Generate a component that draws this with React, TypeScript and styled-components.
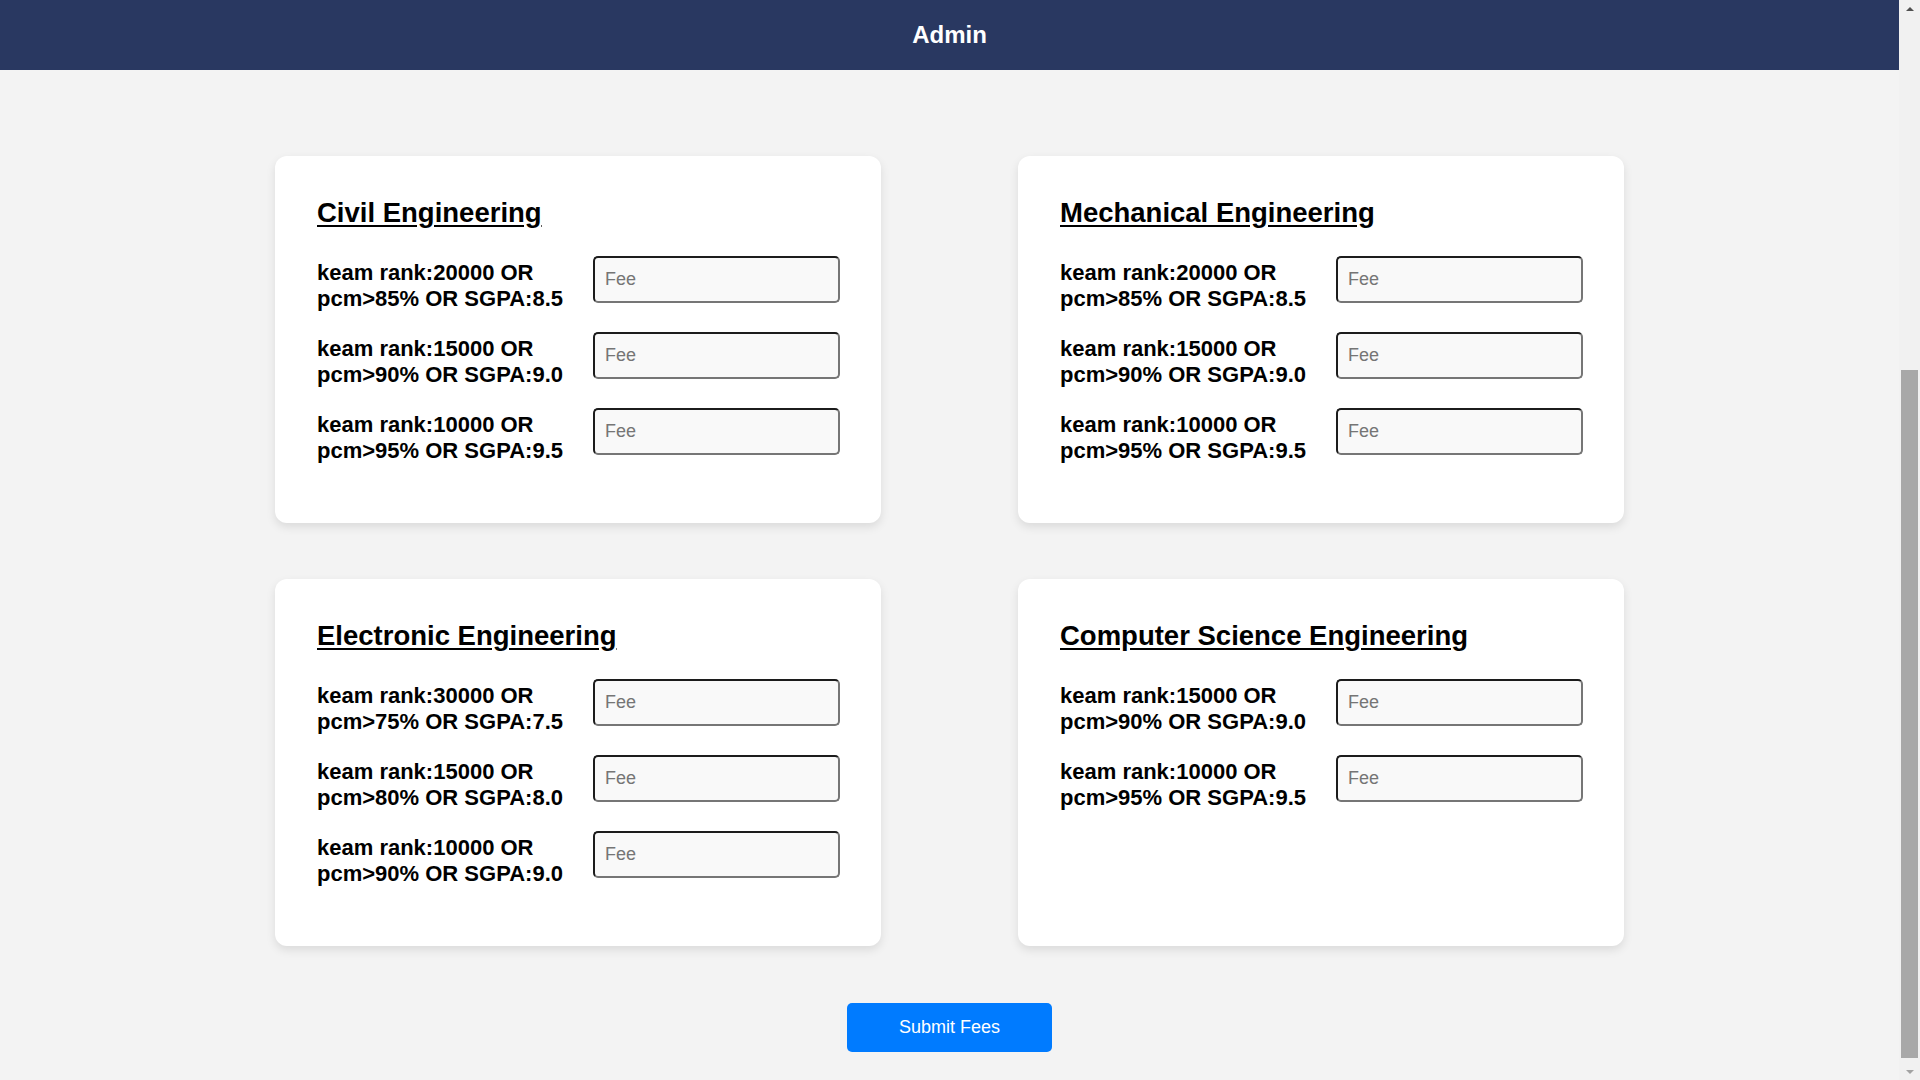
import React from "react";
import styled, { createGlobalStyle } from "styled-components";

const GlobalStyle = createGlobalStyle`
  body {
    margin: 0;
    background: #f3f3f3;
    font-family: "Liberation Sans", Arial, sans-serif;
    color: #000;
  }
  * {
    box-sizing: border-box;
  }
`;

const Window = styled.div`
  display: flex;
  min-height: 100vh;
`;

const Page = styled.div`
  flex: 1;
  min-width: 0;
`;

const Header = styled.header`
  height: 70px;
  background: #293861;
  display: flex;
  align-items: center;
  justify-content: center;
`;

const Title = styled.h1`
  margin: 0;
  color: #fff;
  font-size: 24px;
  font-weight: 700;
`;

const Main = styled.main`
  padding: 86px 0 28px;
  display: flex;
  flex-direction: column;
  align-items: center;
`;

const Grid = styled.div`
  display: grid;
  grid-template-columns: repeat(2, 606px);
  column-gap: 137px;
  row-gap: 56px;
`;

const Card = styled.section`
  background: #fff;
  border-radius: 12px;
  box-shadow: 0 4px 10px rgba(0, 0, 0, 0.1);
  padding: 41px 41px 39px 42px;
`;

const CardTitle = styled.h2`
  margin: 0 0 28px;
  font-size: 27.5px;
  line-height: 31px;
  font-weight: 700;
  text-decoration: underline;
  text-underline-offset: 3px;
`;

const Row = styled.div`
  display: flex;
  align-items: flex-start;
  gap: 24px;
  margin-bottom: 20px;
`;

const Label = styled.label`
  flex: 1;
  padding-top: 4px;
  font-size: 22px;
  line-height: 26px;
  font-weight: 700;
`;

const FeeInput = styled.input`
  width: 247px;
  height: 47px;
  padding: 0 10px;
  border-width: 2px;
  border-style: solid;
  border-color: #1c1c1c #767676 #767676 #1c1c1c;
  border-radius: 5px;
  background: #f9f9f9;
  font-family: "Liberation Sans", Arial, sans-serif;
  font-size: 18px;
  color: #000;
  outline: none;

  &::placeholder {
    color: #757575;
  }
`;

const SubmitButton = styled.button`
  margin-top: 57px;
  padding: 14px 52px;
  border: none;
  border-radius: 5px;
  background: #007bff;
  color: #fff;
  font-family: "Liberation Sans", Arial, sans-serif;
  font-size: 18px;
  line-height: 20.7px;
  cursor: pointer;
`;

const ScrollTrack = styled.div`
  flex: none;
  width: 21px;
  height: 100vh;
  position: sticky;
  top: 0;
  background: #f1f1f1;
  display: flex;
  flex-direction: column;
`;

const ScrollButton = styled.div`
  height: 17px;
  display: flex;
  align-items: center;
  justify-content: center;
`;

const Arrow = styled.span<{ $down?: boolean }>`
  width: 0;
  height: 0;
  border-left: 4px solid transparent;
  border-right: 4px solid transparent;
  ${(p) =>
    p.$down
      ? "border-top: 4px solid #a3a3a3;"
      : "border-bottom: 4px solid #505050;"}
`;

const ThumbArea = styled.div`
  flex: 1;
  display: flex;
  padding: 353px 2px 5px;
`;

const Thumb = styled.div`
  flex: 1;
  background: #a8a8a8;
`;

type Criterion = { rank: string; pcm: string; sgpa: string };

const departments: { name: string; criteria: Criterion[] }[] = [
  {
    name: "Civil Engineering",
    criteria: [
      { rank: "20000", pcm: "85", sgpa: "8.5" },
      { rank: "15000", pcm: "90", sgpa: "9.0" },
      { rank: "10000", pcm: "95", sgpa: "9.5" },
    ],
  },
  {
    name: "Mechanical Engineering",
    criteria: [
      { rank: "20000", pcm: "85", sgpa: "8.5" },
      { rank: "15000", pcm: "90", sgpa: "9.0" },
      { rank: "10000", pcm: "95", sgpa: "9.5" },
    ],
  },
  {
    name: "Electronic Engineering",
    criteria: [
      { rank: "30000", pcm: "75", sgpa: "7.5" },
      { rank: "15000", pcm: "80", sgpa: "8.0" },
      { rank: "10000", pcm: "90", sgpa: "9.0" },
    ],
  },
  {
    name: "Computer Science Engineering",
    criteria: [
      { rank: "15000", pcm: "90", sgpa: "9.0" },
      { rank: "10000", pcm: "95", sgpa: "9.5" },
    ],
  },
];

export default function App() {
  return (
    <Window>
      <GlobalStyle />
      <Page>
        <Header>
          <Title>Admin</Title>
        </Header>
        <Main>
          <Grid>
            {departments.map((d) => (
              <Card key={d.name}>
                <CardTitle>{d.name}</CardTitle>
                {d.criteria.map((c, i) => (
                  <Row key={i}>
                    <Label>
                      keam rank:{c.rank} OR pcm&gt;{c.pcm}% OR SGPA:{c.sgpa}
                    </Label>
                    <FeeInput type="text" placeholder="Fee" />
                  </Row>
                ))}
              </Card>
            ))}
          </Grid>
          <SubmitButton type="button">Submit Fees</SubmitButton>
        </Main>
      </Page>
      <ScrollTrack aria-hidden="true">
        <ScrollButton>
          <Arrow />
        </ScrollButton>
        <ThumbArea>
          <Thumb />
        </ThumbArea>
        <ScrollButton>
          <Arrow $down />
        </ScrollButton>
      </ScrollTrack>
    </Window>
  );
}
